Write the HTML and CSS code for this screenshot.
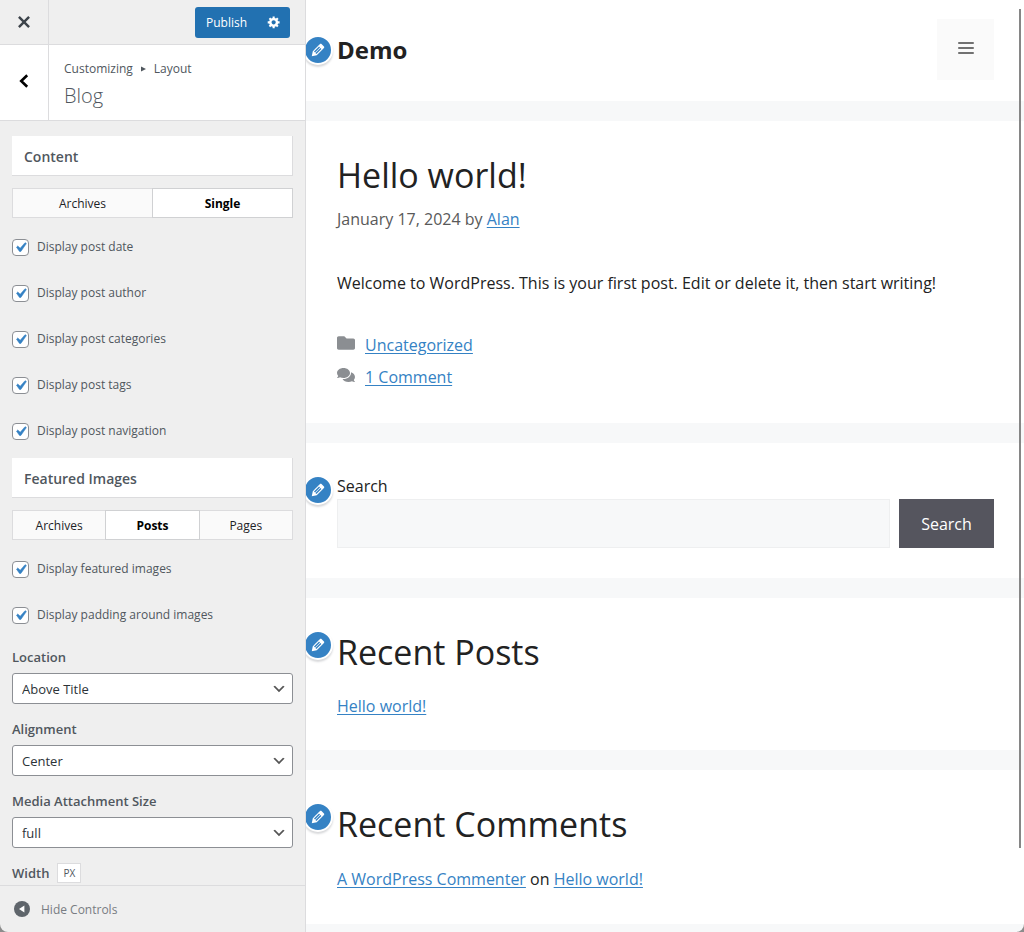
FILE: index.html
```
<!DOCTYPE html>
<html lang="en">
<head>
  <meta charset="UTF-8">
  <meta name="viewport" content="width=device-width, initial-scale=1.0">
  <title>Customize: Demo</title>
  <link rel="stylesheet" href="styles.css">
</head>
<body>
  <svg class="sprite" aria-hidden="true">
    <symbol id="icon-pencil" viewBox="0 0 20 20">
      <path d="M13.89 3.39l2.71 2.72c.46.46.42 1.24.03 1.64l-8.01 8.02-5.56 1.16 1.16-5.58s7.6-7.63 7.99-8.03c.39-.39 1.22-.39 1.68.07zm-2.73 2.79l-5.59 5.61 1.11 1.11 5.54-5.65zm-2.97 8.23l5.58-5.6-1.07-1.08-5.59 5.6z"/>
    </symbol>
  </svg>

  <div class="customizer">
    <aside class="sidebar">
      <header class="sidebar-header">
        <button class="close-btn" aria-label="Close">
          <svg viewBox="0 0 20 20" width="24" height="24"><path d="M14.95 6.46L11.41 10l3.54 3.54-1.41 1.41L10 11.42l-3.53 3.53-1.42-1.42L8.58 10 5.05 6.47l1.42-1.42L10 8.58l3.54-3.53z"/></svg>
        </button>
        <div class="publish-group">
          <button class="publish-btn">Publish</button>
          <button class="settings-btn" aria-label="Publish settings">
            <svg viewBox="0 0 20 20" width="14" height="14"><path d="M18 12h-2.18c-.17.7-.44 1.35-.81 1.93l1.54 1.54-2.1 2.1-1.54-1.54c-.58.36-1.23.63-1.91.79V19H8v-2.18c-.68-.16-1.33-.43-1.91-.79l-1.54 1.54-2.12-2.12 1.54-1.54c-.36-.58-.63-1.23-.79-1.91H1V9.03h2.17c.16-.7.44-1.35.8-1.94L2.43 5.55l2.1-2.1 1.54 1.54c.58-.37 1.24-.64 1.93-.81V2h3v2.18c.68.16 1.33.43 1.91.79l1.54-1.54 2.12 2.12-1.54 1.54c.36.59.64 1.24.8 1.94H18V12zm-8.5 1.5c1.66 0 3-1.34 3-3s-1.34-3-3-3-3 1.34-3 3 1.34 3 3 3z"/></svg>
          </button>
        </div>
      </header>

      <div class="panel-title">
        <button class="back-btn" aria-label="Back">
          <svg viewBox="0 0 10 14" width="10" height="14"><path d="M8.2 1.2L2.2 7l6 5.8" fill="none" stroke="currentColor" stroke-width="2.6"/></svg>
        </button>
        <div class="panel-text">
          <div class="crumbs">Customizing <svg viewBox="0 0 6 6" width="5" height="6"><path d="M0 0l6 3-6 3z"/></svg> Layout</div>
          <h2>Blog</h2>
        </div>
      </div>

      <div class="controls">
        <h3 class="section-title">Content</h3>
        <div class="tabs">
          <button>Archives</button>
          <button class="active">Single</button>
        </div>
        <div class="checks">
          <label><input type="checkbox" checked>Display post date</label>
          <label><input type="checkbox" checked>Display post author</label>
          <label><input type="checkbox" checked>Display post categories</label>
          <label><input type="checkbox" checked>Display post tags</label>
          <label><input type="checkbox" checked>Display post navigation</label>
        </div>

        <h3 class="section-title">Featured Images</h3>
        <div class="tabs">
          <button>Archives</button>
          <button class="active">Posts</button>
          <button>Pages</button>
        </div>
        <div class="checks">
          <label><input type="checkbox" checked>Display featured images</label>
          <label><input type="checkbox" checked>Display padding around images</label>
        </div>

        <div class="fields">
          <div class="field">
            <label for="location">Location</label>
            <select id="location"><option>Above Title</option></select>
          </div>
          <div class="field">
            <label for="alignment">Alignment</label>
            <select id="alignment"><option>Center</option></select>
          </div>
          <div class="field">
            <label for="mediaSize">Media Attachment Size</label>
            <select id="mediaSize"><option>full</option></select>
          </div>
          <div class="width-field">
            <span>Width</span>
            <button class="unit">PX</button>
          </div>
        </div>
      </div>

      <footer class="sidebar-footer">
        <button class="hide-btn">
          <svg viewBox="0 0 16 16" width="16" height="16"><circle cx="8" cy="8" r="8" fill="#5f656b"/><path d="M10.4 4.6v6.8L5 8z" fill="#fff"/></svg>
          Hide Controls
        </button>
      </footer>
    </aside>

    <main class="preview">
      <header class="site-header">
        <button class="edit-btn" aria-label="Edit site title"><svg width="18" height="18"><use href="#icon-pencil"/></svg></button>
        <a class="site-title" href="#">Demo</a>
        <button class="menu-toggle" aria-label="Menu">
          <svg viewBox="0 0 512 512" width="16" height="16"><path d="M0 96c0-13.255 10.745-24 24-24h464c13.255 0 24 10.745 24 24s-10.745 24-24 24H24c-13.255 0-24-10.745-24-24zm0 160c0-13.255 10.745-24 24-24h464c13.255 0 24 10.745 24 24s-10.745 24-24 24H24c-13.255 0-24-10.745-24-24zm0 160c0-13.255 10.745-24 24-24h464c13.255 0 24 10.745 24 24s-10.745 24-24 24H24c-13.255 0-24-10.745-24-24z"/></svg>
        </button>
      </header>

      <article class="card">
        <h1>Hello world!</h1>
        <div class="entry-meta">January 17, 2024 by <a href="#">Alan</a></div>
        <p class="entry-content">Welcome to WordPress. This is your first post. Edit or delete it, then start writing!</p>
        <footer class="entry-footer">
          <div>
            <svg viewBox="0 0 512 512" width="18" height="18"><path d="M464 128H272l-64-64H48C21.49 64 0 85.49 0 112v288c0 26.51 21.49 48 48 48h416c26.51 0 48-21.49 48-48V176c0-26.51-21.49-48-48-48z"/></svg>
            <a href="#">Uncategorized</a>
          </div>
          <div>
            <svg viewBox="0 0 576 512" width="18" height="18"><path d="M416 192c0-88.4-93.1-160-208-160S0 103.6 0 192c0 34.3 14.1 65.9 38 92-13.4 30.2-35.5 54.2-35.8 54.5-2.2 2.3-2.8 5.7-1.5 8.7S4.8 352 8 352c36.6 0 66.9-12.3 88.7-25 32.2 15.7 70.3 25 111.3 25 114.9 0 208-71.6 208-160zm122 220c23.9-26 38-57.7 38-92 0-66.9-53.5-124.2-129.3-148.1.9 6.6 1.3 13.3 1.3 20.1 0 105.9-107.7 192-240 192-10.8 0-21.3-.8-31.7-1.9C207.8 439.6 281.8 480 368 480c41 0 79.1-9.2 111.3-25 21.8 12.7 52.1 25 88.7 25 3.2 0 6.1-1.9 7.3-4.8 1.3-2.9.7-6.3-1.5-8.7-.3-.2-22.4-24.2-35.8-54.5z"/></svg>
            <a href="#">1 Comment</a>
          </div>
        </footer>
      </article>

      <section class="card">
        <button class="edit-btn" aria-label="Edit search widget"><svg width="18" height="18"><use href="#icon-pencil"/></svg></button>
        <form class="search-form">
          <label for="search">Search</label>
          <div class="search-row">
            <input type="search" id="search">
            <button type="button">Search</button>
          </div>
        </form>
      </section>

      <section class="card">
        <button class="edit-btn" aria-label="Edit recent posts"><svg width="18" height="18"><use href="#icon-pencil"/></svg></button>
        <h2>Recent Posts</h2>
        <ul class="posts">
          <li><a href="#">Hello world!</a></li>
        </ul>
      </section>

      <section class="card">
        <button class="edit-btn" aria-label="Edit recent comments"><svg width="18" height="18"><use href="#icon-pencil"/></svg></button>
        <h2>Recent Comments</h2>
        <ul class="comments">
          <li><a href="#">A WordPress Commenter</a> on <a href="#">Hello world!</a></li>
        </ul>
      </section>
      <div class="scroll-thumb"></div>
    </main>
  </div>
</body>
</html>
```
FILE: styles.css
```
* {
  box-sizing: border-box;
}
body {
  margin: 0;
  background: #8c8c8c;
  font-family: "Open Sans", "Noto Sans", sans-serif;
}
button, input, select {
  font-family: inherit;
  margin: 0;
}
button {
  border: none;
  padding: 0;
  cursor: pointer;
}
h1, h2, h3, p, ul {
  margin: 0;
  padding: 0;
  font-weight: 400;
}
svg {
  fill: currentColor;
  flex-shrink: 0;
}
.sprite {
  display: none;
}
.customizer {
  display: flex;
  height: 100vh;
  overflow: hidden;
  border-radius: 0 0 8px 8px;
}

/* Sidebar */
.sidebar {
  display: flex;
  flex-direction: column;
  flex: 0 0 306px;
  background: #efefef;
  border-right: 1px solid #dcdcde;
  color: #50575e;
  font-size: 12px;
}
.sidebar-header {
  display: flex;
  justify-content: space-between;
  align-items: center;
  height: 45px;
  padding-right: 15px;
  border-bottom: 1px solid #dcdcde;
}
.close-btn {
  display: flex;
  align-items: center;
  justify-content: center;
  width: 49px;
  height: 44px;
  background: none;
  border-right: 1px solid #dcdcde;
  color: #3c434a;
}
.publish-group {
  display: flex;
  height: 31px;
  border-radius: 3px;
  background: #2271b1;
  color: #fff;
}
.publish-group button {
  display: flex;
  align-items: center;
  justify-content: center;
  background: none;
  color: inherit;
  font-size: 12px;
}
.publish-btn {
  width: 63px;
}
.settings-btn {
  width: 32px;
}
.panel-title {
  display: flex;
  height: 76px;
  background: #fff;
  border-bottom: 1px solid #dcdcde;
}
.back-btn {
  width: 49px;
  background: #fff;
  border-right: 1px solid #dcdcde;
  color: #000;
}
.panel-text {
  padding: 14px 15px;
}
.crumbs {
  display: flex;
  align-items: center;
  gap: 8px;
  line-height: 20px;
}
.panel-text h2 {
  font-size: 20px;
  font-weight: 300;
  line-height: 34px;
}
.controls {
  flex: 1;
  min-height: 0;
  overflow: hidden;
  padding: 15px 12px 0;
}
.section-title {
  height: 40px;
  padding: 0 12px;
  background: #fff;
  border: 1px solid #dcdcde;
  border-width: 0 1px 1px 0;
  font-size: 14px;
  font-weight: 600;
  line-height: 41px;
}
.tabs {
  display: flex;
  margin-top: 12px;
}
.tabs button {
  flex: 1;
  height: 30px;
  background: #fafafa;
  border: 1px solid #dcdcde;
  color: #1d2327;
  font-size: 12px;
}
.tabs button + button {
  border-left: none;
}
.tabs .active {
  background: #fff;
  color: #000;
  font-weight: 700;
  box-shadow: -1px 0 0 #d0d1d3;
  border-color: #d0d1d3;
}
.checks {
  display: flex;
  flex-direction: column;
  gap: 26px;
  padding: 19px 0 17px;
}
.checks label {
  display: flex;
  align-items: center;
  gap: 8px;
  line-height: 20px;
}
.checks input {
  appearance: none;
  width: 17px;
  height: 17px;
  border: 1px solid #8c8f94;
  border-radius: 4px;
  background: #fff;
}
.checks input:checked {
  background: #fff url("data:image/svg+xml,%3Csvg xmlns='http://www.w3.org/2000/svg' viewBox='0 0 20 20'%3E%3Cpath d='M14.83 4.89l1.34.94-5.81 8.38H9.02L5.78 9.67l1.34-1.25 2.57 2.4z' fill='%233582c4' stroke='%233582c4' stroke-width='.6'/%3E%3C/svg%3E") center / 19px no-repeat;
}
.fields {
  display: flex;
  flex-direction: column;
  gap: 15px;
  padding-top: 5px;
}
.field {
  display: flex;
  flex-direction: column;
  gap: 6px;
}
.field label, .width-field {
  font-size: 13px;
  font-weight: 600;
  line-height: 20px;
}
.field select {
  appearance: none;
  height: 31px;
  padding: 0 24px 0 9px;
  border: 1px solid #8c8f94;
  border-radius: 3px;
  background: #fff url("data:image/svg+xml,%3Csvg xmlns='http://www.w3.org/2000/svg' viewBox='0 0 20 20'%3E%3Cpath d='M5 6l5 5 5-5 2 1-7 7-7-7 2-1z' fill='%23555'/%3E%3C/svg%3E") right 5px center / 16px no-repeat;
  color: #2c3338;
  font-size: 13px;
}
.width-field {
  display: flex;
  align-items: center;
  gap: 8px;
}
.unit {
  width: 24px;
  height: 20px;
  background: #fff;
  border: 1px solid #dcdcde;
  color: #50575e;
  font-size: 10px;
}
.sidebar-footer {
  display: flex;
  height: 47px;
  padding: 0 14px;
  border-top: 1px solid #dcdcde;
}
.hide-btn {
  display: flex;
  align-items: center;
  gap: 11px;
  background: none;
  color: #787c82;
  font-size: 12px;
}

/* Site preview */
.preview {
  position: relative;
  flex: 1;
  display: flex;
  flex-direction: column;
  gap: 20px;
  overflow: hidden;
  background: #f7f8f9;
  color: #222;
  font-size: 16px;
  line-height: 28px;
}
.preview a {
  color: #3582c4;
  text-underline-offset: 2px;
}
.site-header {
  position: relative;
  display: flex;
  align-items: center;
  justify-content: space-between;
  padding: 19px 30px 21px 31px;
  background: #fff;
}
.preview .site-title {
  color: #222;
  font-size: 24px;
  font-weight: 700;
  text-decoration: none;
}
.menu-toggle {
  display: flex;
  align-items: center;
  justify-content: center;
  width: 57px;
  height: 61px;
  padding-bottom: 4px;
  background: #fafafa;
  color: #444;
}
.card {
  position: relative;
  padding: 30px 30px 30px 31px;
  background: #fff;
}
.card h1, .card h2 {
  font-size: 34px;
  line-height: 48px;
}
.entry-meta {
  margin-top: 6px;
  color: #595959;
}
.entry-content {
  margin: 36px 0 32px;
}
.entry-footer div {
  display: flex;
  align-items: center;
  gap: 10px;
  line-height: 32px;
}
.entry-footer svg {
  margin-bottom: 4px;
  color: #8b8e92;
}
.search-form label {
  display: block;
  line-height: 26px;
}
.search-row {
  display: flex;
  gap: 9px;
}
.search-row input {
  flex: 1;
  min-width: 0;
  height: 49px;
  padding: 0 15px;
  border: 1px solid #eeeff0;
  background: #f7f8f9;
  font-size: 16px;
}
.search-row button {
  width: 95px;
  background: #55555e;
  color: #fff;
  font-size: 16px;
}
.card ul {
  margin-top: 16px;
  list-style: none;
}
.comments {
  line-height: 30px;
}

/* Edit shortcuts sit over the left edge of each block */
.edit-btn {
  position: absolute;
  left: -3px;
  top: 32px;
  display: flex;
  align-items: center;
  justify-content: center;
  width: 30px;
  height: 30px;
  border: 2px solid #fff;
  border-radius: 50%;
  background: #3582c4;
  color: #fff;
  box-shadow: 0 2px 2px rgba(60, 67, 74, 0.2);
}
.site-header .edit-btn {
  top: 35px;
}
.scroll-thumb {
  position: absolute;
  top: 9px;
  right: 3px;
  width: 2px;
  height: 90%;
  background: #868686;
}
```
